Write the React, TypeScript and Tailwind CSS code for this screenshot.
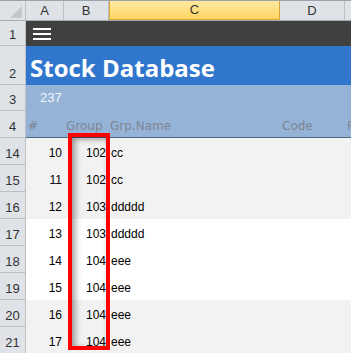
import React from 'react'

const rows = [
  { n: 14, a: 10, b: 102, c: 'cc', band: true },
  { n: 15, a: 11, b: 102, c: 'cc', band: true },
  { n: 16, a: 12, b: 103, c: 'ddddd', band: true },
  { n: 17, a: 13, b: 103, c: 'ddddd', band: false },
  { n: 18, a: 14, b: 104, c: 'eee', band: false },
  { n: 19, a: 15, b: 104, c: 'eee', band: false },
  { n: 20, a: 16, b: 104, c: 'eee', band: true },
  { n: 21, a: 17, b: 104, c: 'eee', band: true },
]

function RowHead({ n, h }: { n: number; h: string }) {
  return (
    <div
      className={`${h} w-[26px] shrink-0 flex items-end justify-center pb-[3px] bg-[#dfe2e6] border-r border-b border-[#bcc0c5] text-[13px] leading-[15px] text-[#333]`}
    >
      {n}
    </div>
  )
}

export default function App() {
  return (
    <div
      className="relative w-[351px] h-[353px] overflow-hidden bg-white"
      style={{ fontFamily: '"Liberation Sans", Arial, sans-serif' }}
    >
      {/* column headers */}
      <div className="flex h-[21px] bg-[#dfe2e6] border-t border-t-[#9ea3a9] border-b border-[#a9aeb4] text-[13px] text-[#333]">
        <div className="w-[26px] shrink-0 border-r border-[#bcc0c5] flex items-end justify-end pr-[3px] pb-[2px]">
          <svg width="12" height="12" viewBox="0 0 12 12">
            <polygon points="12,0 12,12 0,12" fill="#c3c7cc" />
          </svg>
        </div>
        <div className="w-[38px] shrink-0 border-r border-[#bcc0c5] flex items-center justify-center">A</div>
        <div className="w-[45px] shrink-0 border-r border-[#bcc0c5] flex items-center justify-center">B</div>
        <div className="w-[171px] shrink-0 flex items-center justify-center bg-gradient-to-b from-[#ffe9a0] to-[#ffd660] border-x border-b border-[#e2a23a]">
          C
        </div>
        <div className="w-[65px] shrink-0 border-r border-[#bcc0c5] flex items-center justify-center">D</div>
        <div className="flex-1" />
      </div>

      {/* row 1: toolbar */}
      <div className="flex">
        <RowHead n={1} h="h-[25px]" />
        <div className="flex-1 bg-[#404040] flex items-center pl-[7px]">
          <div className="flex flex-col gap-[3px] w-[18px]">
            <span className="h-[2px] bg-white" />
            <span className="h-[2px] bg-white" />
            <span className="h-[2px] bg-white" />
          </div>
        </div>
      </div>

      {/* row 2: title */}
      <div className="flex">
        <RowHead n={2} h="h-[39px]" />
        <div
          className="flex-1 bg-[#3076cd] flex items-center pl-[4px] pt-[4px] text-white font-bold text-[24px] leading-none"
          style={{ fontFamily: '"Open Sans", sans-serif' }}
        >
          Stock Database
        </div>
      </div>

      {/* row 3: count */}
      <div className="flex">
        <RowHead n={3} h="h-[26px]" />
        <div className="flex-1 bg-[#95b3d7] flex items-center pl-[14px] text-[13px] text-[#f2f6fa]">237</div>
      </div>

      {/* row 4: column titles */}
      <div className="flex">
        <RowHead n={4} h="h-[27px]" />
        <div
          className="flex-1 flex bg-[#95b3d7] border-b border-[#52687f] text-[12px] text-[#7d8693] items-center pt-[3px]"
          style={{ fontFamily: '"DejaVu Sans", sans-serif' }}
        >
          <div className="w-[38px] pl-[2px]">#</div>
          <div className="w-[45px] pl-[2px]">Group</div>
          <div className="w-[171px] pl-[1px]">Grp.Name</div>
          <div className="w-[65px] pl-[2px]">Code</div>
          <div className="flex-1 pl-[2px]">P</div>
        </div>
      </div>

      {/* data rows */}
      {rows.map((r) => (
        <div key={r.n} className="flex">
          <RowHead n={r.n} h="h-[27px]" />
          <div
            className={`flex-1 flex items-center pt-[2px] text-[12px] text-black ${
              r.band ? 'bg-[#f2f2f2]' : 'bg-white'
            }`}
          >
            <div className="w-[38px] text-right pr-[2px]">{r.a}</div>
            <div className="w-[45px] text-right pr-[3px]">{r.b}</div>
            <div className="w-[171px] pl-[2px]">{r.c}</div>
          </div>
        </div>
      ))}

      {/* selection highlight */}
      <div className="absolute left-[68px] top-[133px] w-[42px] h-[217px] border-4 border-[#ff0000] shadow-[inset_3px_2px_6px_rgba(0,0,0,0.4)]" />
    </div>
  )
}
